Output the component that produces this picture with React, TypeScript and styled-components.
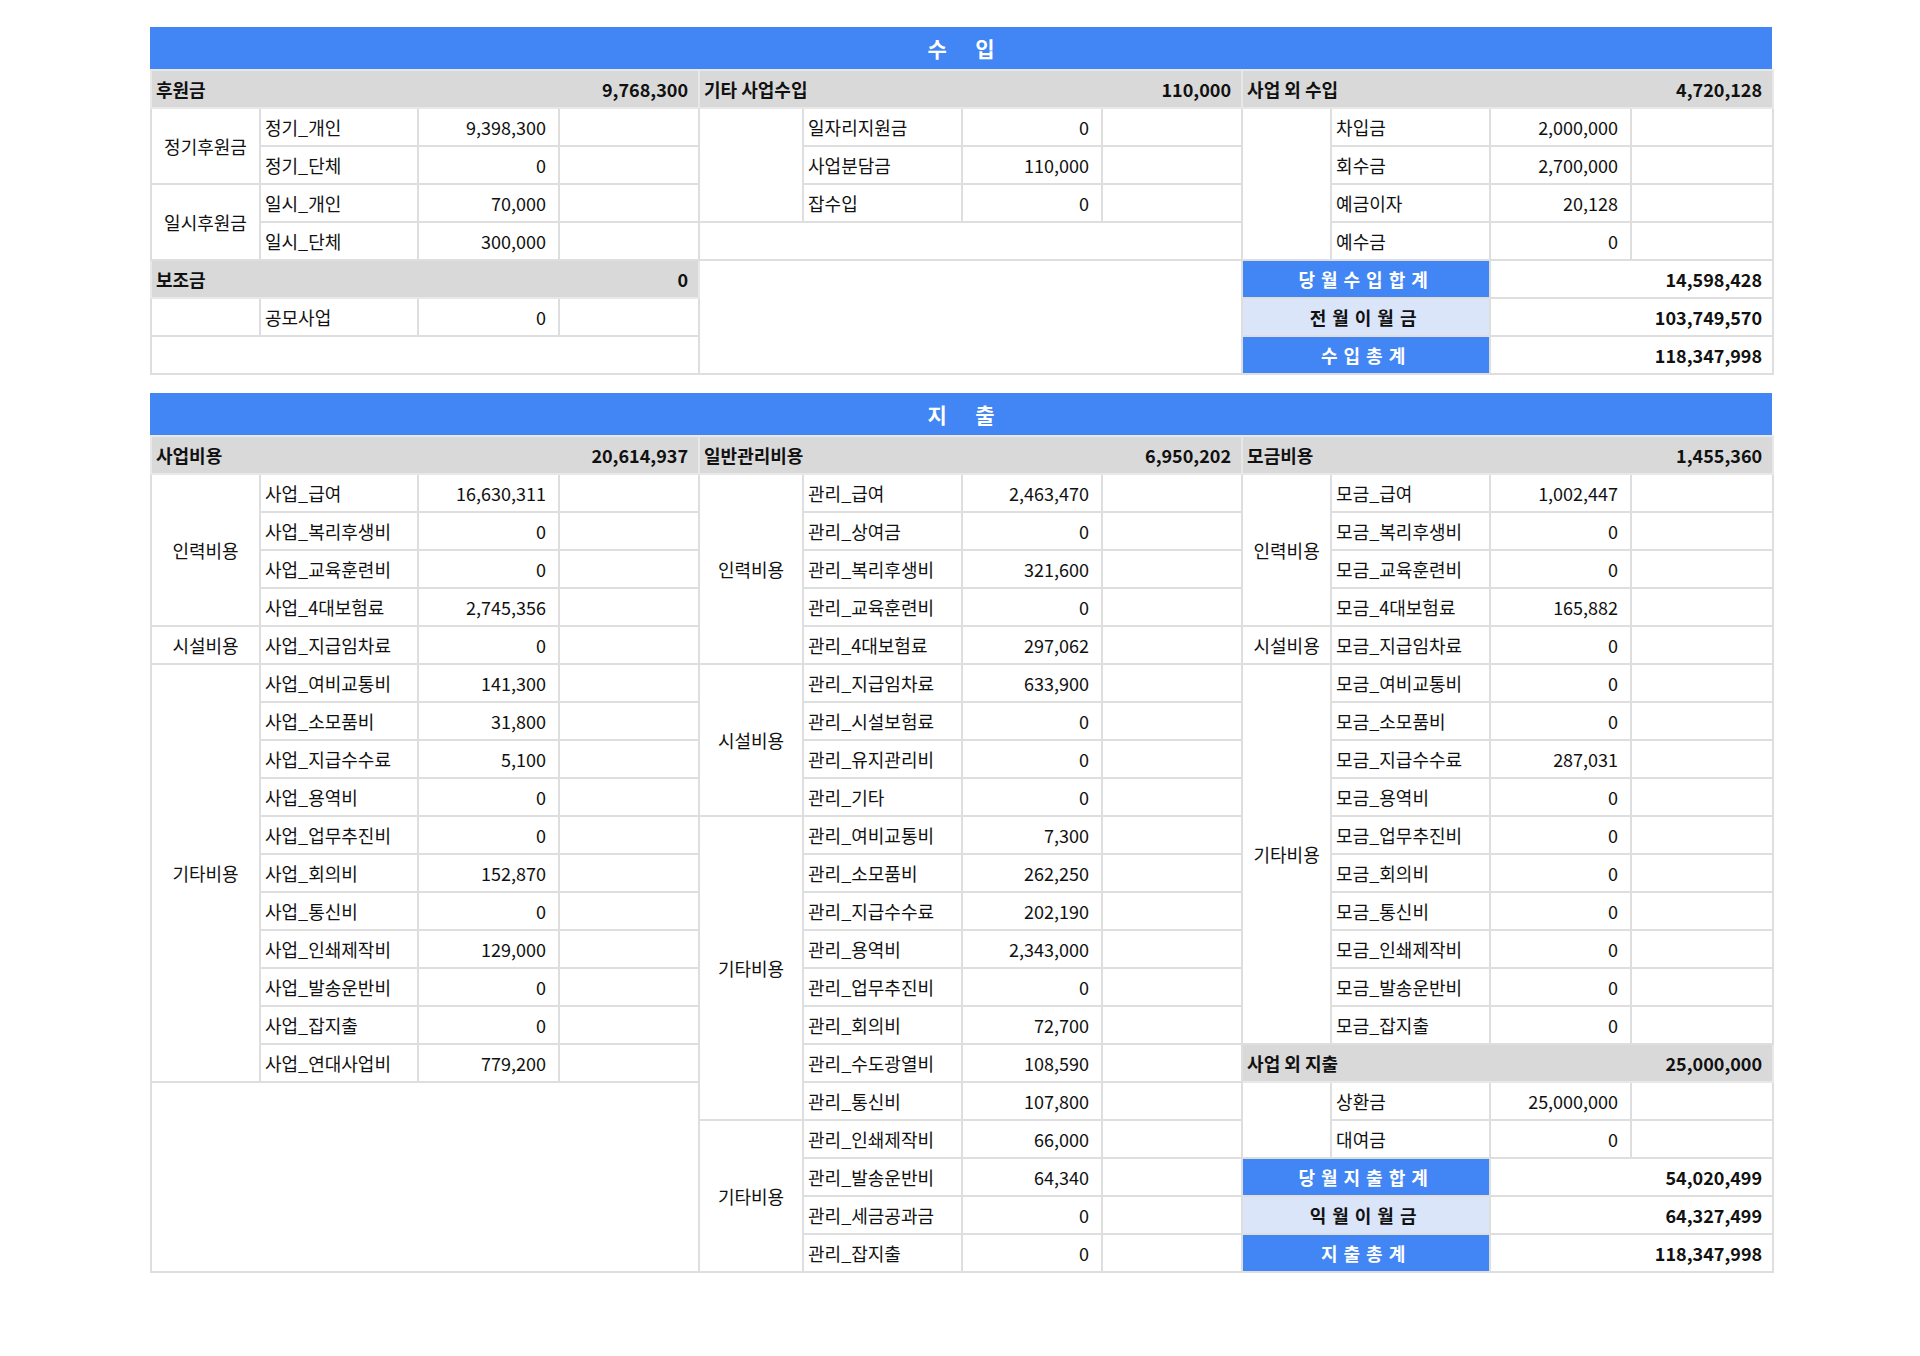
import React from 'react'
import styled, { createGlobalStyle } from 'styled-components'

const Global = createGlobalStyle`
  body {
    margin: 0;
    background: #fff;
    font-family: 'Noto Sans CJK KR', 'Noto Sans', sans-serif;
    color: #111;
  }
`

const Page = styled.div`
  padding: 27px 0 40px 150px;
  width: 1622px;
`

const Section = styled.section`
  margin-bottom: 18px;
`

const Title = styled.div`
  height: 42px;
  background: #4285f4;
  color: #fff;
  font-weight: 700;
  font-size: 21px;
  display: flex;
  align-items: center;
  justify-content: center;
  white-space: pre;
`

const Table = styled.table`
  width: 1622px;
  border-collapse: collapse;
  table-layout: fixed;
  font-size: 18px;
  td {
    height: 36px;
    padding: 0;
    border: 2px solid #dedede;
    white-space: nowrap;
    overflow: hidden;
  }
`

type Kind = 'head' | 'cat' | 'item' | 'num' | 'blank' | 'sum' | 'sumLight' | 'total'

const Cell = styled.td<{ $kind: Kind }>`
  background: ${p =>
    p.$kind === 'head' ? '#d9d9d9' : p.$kind === 'sum' ? '#4285f4' : p.$kind === 'sumLight' ? '#dae5fa' : '#fff'};
  color: ${p => (p.$kind === 'sum' ? '#fff' : '#111')};
  font-weight: ${p => (['head', 'sum', 'sumLight', 'total'].includes(p.$kind) ? 700 : 400)};
  text-align: ${p =>
    p.$kind === 'num' || p.$kind === 'total' ? 'right' : p.$kind === 'item' || p.$kind === 'head' ? 'left' : 'center'};
  padding: ${p =>
    p.$kind === 'num' ? '0 12px 0 0' : p.$kind === 'total' ? '0 10px 0 0' : p.$kind === 'item' ? '0 0 0 4px' : '0 4px'} !important;
  letter-spacing: ${p => (p.$kind === 'sum' || p.$kind === 'sumLight' ? '6px' : 'normal')};
  ${p => p.$kind === 'head' && 'border-color: #e8e8e8 !important;'}
`

const HeadInner = styled.div`
  display: flex;
  justify-content: space-between;
  padding-right: 6px;
`

type C = { kind: Kind; text?: string; value?: string; rs?: number; cs?: number }
type Row = C[]

const head = (text: string, value: string): Row => [{ kind: 'head', text, value, cs: 4 }]
const blankRows = (n: number): Row[] =>
  Array.from({ length: n }, (_, i) => (i === 0 ? [{ kind: 'blank', cs: 4, rs: n } as C] : []))
const group = (cat: string, items: [string, string][]): Row[] =>
  items.map(([l, v], i) => [
    ...(i === 0 ? [{ kind: 'cat', text: cat, rs: items.length } as C] : []),
    { kind: 'item', text: l },
    { kind: 'num', text: v },
    { kind: 'blank' },
  ])
const summary = (label: string, value: string, light = false): Row => [
  { kind: light ? 'sumLight' : 'sum', text: label, cs: 2 },
  { kind: 'total', text: value, cs: 2 },
]

const incomeCols: Row[][] = [
  [
    head('후원금', '9,768,300'),
    ...group('정기후원금', [['정기_개인', '9,398,300'], ['정기_단체', '0']]),
    ...group('일시후원금', [['일시_개인', '70,000'], ['일시_단체', '300,000']]),
    head('보조금', '0'),
    ...group('', [['공모사업', '0']]),
    ...blankRows(1),
  ],
  [
    head('기타 사업수입', '110,000'),
    ...group('', [['일자리지원금', '0'], ['사업분담금', '110,000'], ['잡수입', '0']]),
    ...blankRows(1),
    ...blankRows(3),
  ],
  [
    head('사업 외 수입', '4,720,128'),
    ...group('', [['차입금', '2,000,000'], ['회수금', '2,700,000'], ['예금이자', '20,128'], ['예수금', '0']]),
    summary('당월수입합계', '14,598,428'),
    summary('전월이월금', '103,749,570', true),
    summary('수입총계', '118,347,998'),
  ],
]

const etc = (p: string, names: string[], vals: string[]): [string, string][] =>
  names.map((n, i) => [`${p}_${n}`, vals[i]])

const expenseCols: Row[][] = [
  [
    head('사업비용', '20,614,937'),
    ...group('인력비용', etc('사업', ['급여', '복리후생비', '교육훈련비', '4대보험료'], ['16,630,311', '0', '0', '2,745,356'])),
    ...group('시설비용', [['사업_지급임차료', '0']]),
    ...group(
      '기타비용',
      etc(
        '사업',
        ['여비교통비', '소모품비', '지급수수료', '용역비', '업무추진비', '회의비', '통신비', '인쇄제작비', '발송운반비', '잡지출', '연대사업비'],
        ['141,300', '31,800', '5,100', '0', '0', '152,870', '0', '129,000', '0', '0', '779,200']
      )
    ),
    ...blankRows(5),
  ],
  [
    head('일반관리비용', '6,950,202'),
    ...group('인력비용', etc('관리', ['급여', '상여금', '복리후생비', '교육훈련비', '4대보험료'], ['2,463,470', '0', '321,600', '0', '297,062'])),
    ...group('시설비용', etc('관리', ['지급임차료', '시설보험료', '유지관리비', '기타'], ['633,900', '0', '0', '0'])),
    ...group(
      '기타비용',
      etc(
        '관리',
        ['여비교통비', '소모품비', '지급수수료', '용역비', '업무추진비', '회의비', '수도광열비', '통신비'],
        ['7,300', '262,250', '202,190', '2,343,000', '0', '72,700', '108,590', '107,800']
      )
    ),
    ...group('기타비용', etc('관리', ['인쇄제작비', '발송운반비', '세금공과금', '잡지출'], ['66,000', '64,340', '0', '0'])),
  ],
  [
    head('모금비용', '1,455,360'),
    ...group('인력비용', etc('모금', ['급여', '복리후생비', '교육훈련비', '4대보험료'], ['1,002,447', '0', '0', '165,882'])),
    ...group('시설비용', [['모금_지급임차료', '0']]),
    ...group(
      '기타비용',
      etc(
        '모금',
        ['여비교통비', '소모품비', '지급수수료', '용역비', '업무추진비', '회의비', '통신비', '인쇄제작비', '발송운반비', '잡지출'],
        ['0', '0', '287,031', '0', '0', '0', '0', '0', '0', '0']
      )
    ),
    head('사업 외 지출', '25,000,000'),
    ...group('', [['상환금', '25,000,000'], ['대여금', '0']]),
    summary('당월지출합계', '54,020,499'),
    summary('익월이월금', '64,327,499', true),
    summary('지출총계', '118,347,998'),
  ],
]

const widths = [109, 158, 141, 140, 104, 159, 140, 140, 89, 159, 141, 142]

const Ledger = ({ title, cols }: { title: string; cols: Row[][] }) => {
  const rows = cols[0].map((_, r) => cols.flatMap(c => c[r]))
  return (
    <Section>
      <Title>{title}</Title>
      <Table>
        <colgroup>
          {widths.map((w, i) => (
            <col key={i} style={{ width: w }} />
          ))}
        </colgroup>
        <tbody>
          {rows.map((row, r) => (
            <tr key={r}>
              {row.map((c, i) => (
                <Cell key={i} $kind={c.kind} rowSpan={c.rs} colSpan={c.cs}>
                  {c.kind === 'head' ? (
                    <HeadInner>
                      <span>{c.text}</span>
                      <span>{c.value}</span>
                    </HeadInner>
                  ) : (
                    c.text
                  )}
                </Cell>
              ))}
            </tr>
          ))}
        </tbody>
      </Table>
    </Section>
  )
}

export default function App() {
  return (
    <>
      <Global />
      <Page>
        <Ledger title={'수      입'} cols={incomeCols} />
        <Ledger title={'지      출'} cols={expenseCols} />
      </Page>
    </>
  )
}
